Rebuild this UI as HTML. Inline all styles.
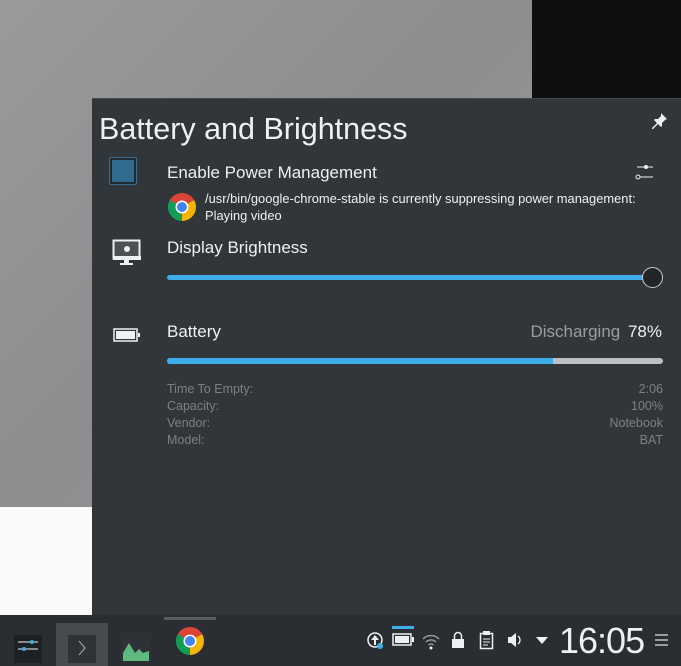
<!DOCTYPE html>
<html><head><style>
*{margin:0;padding:0;box-sizing:border-box}
body{width:681px;height:666px;position:relative;overflow:hidden;background:#2b2f33;font-family:"Liberation Sans","DejaVu Sans",sans-serif}
.a{position:absolute}
.t{color:#eff0f1;white-space:nowrap}
.d{color:#7b8085;font-size:12.5px;white-space:nowrap}
</style></head><body>
<div class="a" style="left:0;top:0;width:532px;height:507px;background:linear-gradient(135deg,#9a9a9b,#8d8d8f 50%,#a3a3a4)"></div>
<div class="a" style="left:532px;top:0;width:149px;height:100px;background:#0f0f0f"></div>
<div class="a" style="left:0;top:507px;width:92px;height:108px;background:#fafafa"></div>
<div class="a" style="left:92px;top:98px;width:589px;height:517px;background:#31363b;border-top:1px solid #45494d"></div>

<div class="a t" style="left:99px;top:112px;font-size:30.5px">Battery and Brightness</div>
<svg class="a" style="left:650px;top:112px" width="18" height="18" viewBox="0 0 18 18"><path d="M11 1l6 6-2 1-3 3 0 3-1 1-3-3-5 5-1 0 0-1 5-5-3-3 1-1 3 0 3-3z" fill="#eff0f1"/></svg>

<div class="a" style="left:109px;top:157px;width:28px;height:28px;border:1.5px solid #3d6b8c;border-radius:2px;background:#1f2a33;padding:2px"><div style="width:100%;height:100%;background:#336b8f"></div></div>
<div class="a t" style="left:167px;top:163px;font-size:17px">Enable Power Management</div>
<svg class="a" style="left:634px;top:162px" width="22" height="20"><line x1="3" y1="5" x2="19" y2="5" stroke="#eff0f1"/><circle cx="12" cy="5" r="2" fill="#eff0f1"/><line x1="6" y1="15" x2="19" y2="15" stroke="#eff0f1"/><circle cx="4" cy="15" r="2" fill="none" stroke="#eff0f1"/></svg>

<svg class="a" style="left:167px;top:192px" width="30" height="30" viewBox="0 0 30 30">
<path d="M15 15 L15 1 A14 14 0 0 1 27.1 8 Z" fill="#db4437"/><path d="M15 1 A14 14 0 0 0 2.9 22 L15 15Z" fill="#db4437"/>
<path d="M2.9 22 A14 14 0 0 1 2.9 8 L15 15Z" fill="#0f9d58"/><path d="M2.9 22 A14 14 0 0 0 15 29 L15 15Z" fill="#0f9d58"/>
<path d="M15 29 A14 14 0 0 0 27.1 8 L15 15Z" fill="#f4b400"/>
<circle cx="15" cy="15" r="6.5" fill="#fff"/><circle cx="15" cy="15" r="5" fill="#4285f4"/></svg>
<div class="a t" style="left:205px;top:190px;font-size:12.9px;line-height:17px">/usr/bin/google-chrome-stable is currently suppressing power management:<br>Playing video</div>

<svg class="a" style="left:112px;top:239px" width="30" height="28"><rect x="1.5" y="1.5" width="26" height="18" fill="#4d5156" stroke="#eff0f1" stroke-width="2"/><rect x="1" y="17" width="28" height="4" fill="#eff0f1"/><rect x="12" y="21" width="5" height="3" fill="#eff0f1"/><rect x="8" y="24" width="13" height="2" fill="#eff0f1"/><circle cx="15" cy="10" r="3" fill="#eff0f1"/></svg>
<div class="a t" style="left:167px;top:238px;font-size:17px">Display Brightness</div>
<div class="a" style="left:167px;top:275px;width:480px;height:5px;border-radius:3px;background:#3daee9"></div>
<div class="a" style="left:642px;top:267px;width:21px;height:21px;border-radius:50%;background:#232629;border:1px solid #c9cbcd"></div>

<svg class="a" style="left:113px;top:328px" width="28" height="14"><rect x="1" y="1" width="23" height="12" fill="none" stroke="#eff0f1" stroke-width="1.5"/><rect x="3" y="3" width="19" height="8" fill="#eff0f1"/><rect x="25" y="5" width="2" height="4" fill="#eff0f1"/></svg>
<div class="a t" style="left:167px;top:322px;font-size:17px">Battery</div>
<div class="a" style="right:19px;top:322px;font-size:17px;white-space:nowrap;color:#9a9ea2">Discharging <span style="color:#eff0f1;margin-left:3px">78%</span></div>
<div class="a" style="left:167px;top:358px;width:496px;height:6px;border-radius:3px;background:#bdbfc1"></div>
<div class="a" style="left:167px;top:358px;width:386px;height:6px;border-radius:3px 0 0 3px;background:#3daee9"></div>

<div class="a d" style="left:167px;top:381px;line-height:17px">Time To Empty:<br>Capacity:<br>Vendor:<br>Model:</div>
<div class="a d" style="right:18px;top:381px;line-height:17px;text-align:right">2:06<br>100%<br>Notebook<br>BAT</div>

<!-- taskbar -->
<div class="a" style="left:0;top:615px;width:681px;height:51px;background:#2a2e32"></div>
<div class="a" style="left:14px;top:635px;width:28px;height:28px;background:#1e2124"></div>
<svg class="a" style="left:15px;top:634px" width="26" height="22"><line x1="3" y1="8" x2="23" y2="8" stroke="#eff0f1"/><circle cx="17" cy="8" r="2" fill="#3daee9"/><line x1="3" y1="15" x2="23" y2="15" stroke="#eff0f1"/><circle cx="9" cy="15" r="2" fill="#3daee9"/></svg>
<div class="a" style="left:56px;top:623px;width:52px;height:43px;background:#474b50"></div>
<div class="a" style="left:68px;top:635px;width:28px;height:28px;background:#2f3336"></div>
<svg class="a" style="left:74px;top:638px" width="16" height="20"><path d="M5 3l6 7-6 7" fill="none" stroke="#9a9ea2" stroke-width="1.2"/></svg>
<svg class="a" style="left:121px;top:633px" width="30" height="28"><rect x="0" y="0" width="30" height="28" fill="#2e3236"/><path d="M2 28 L2 20 8 10 14 20 18 16 22 20 28 18 28 28Z" fill="#5fb87e"/></svg>
<div class="a" style="left:164px;top:617px;width:52px;height:3px;background:#5a5e62"></div>
<svg class="a" style="left:175px;top:625px" width="30" height="32" viewBox="0 0 30 30">
<path d="M15 15 L15 1 A14 14 0 0 1 27.1 8 Z" fill="#db4437"/><path d="M15 1 A14 14 0 0 0 2.9 22 L15 15Z" fill="#db4437"/>
<path d="M2.9 22 A14 14 0 0 1 2.9 8 L15 15Z" fill="#0f9d58"/><path d="M2.9 22 A14 14 0 0 0 15 29 L15 15Z" fill="#0f9d58"/>
<path d="M15 29 A14 14 0 0 0 27.1 8 L15 15Z" fill="#f4b400"/>
<circle cx="15" cy="15" r="6.5" fill="#fff"/><circle cx="15" cy="15" r="5" fill="#4285f4"/></svg>

<svg class="a" style="left:366px;top:631px" width="20" height="20"><circle cx="9" cy="9" r="7" fill="none" stroke="#eff0f1" stroke-width="1.5"/><path d="M9 4l-4 5h3v5h2v-5h3z" fill="#eff0f1"/><circle cx="14" cy="15" r="3" fill="#3daee9"/></svg>
<div class="a" style="left:392px;top:626px;width:22px;height:3px;background:#3daee9"></div>
<svg class="a" style="left:392px;top:632px" width="24" height="16"><rect x="1" y="2" width="18" height="11" fill="none" stroke="#eff0f1" stroke-width="1.5"/><rect x="3" y="4" width="14" height="7" fill="#eff0f1"/><rect x="20" y="5" width="2" height="5" fill="#eff0f1"/></svg>
<svg class="a" style="left:421px;top:631px" width="20" height="20"><path d="M2 8 A11 11 0 0 1 18 8 M5 11 A7 7 0 0 1 15 11 M7.5 14 A3.5 3.5 0 0 1 12.5 14" fill="none" stroke="#9a9ea2" stroke-width="1.4"/><circle cx="10" cy="17" r="1.5" fill="#eff0f1"/></svg>
<svg class="a" style="left:451px;top:630px" width="14" height="20"><path d="M3.5 9 V6 A3.5 3.5 0 0 1 10.5 6 V9" fill="none" stroke="#eff0f1" stroke-width="1.5"/><rect x="1" y="9" width="12" height="9" fill="#eff0f1"/></svg>
<svg class="a" style="left:479px;top:630px" width="16" height="20"><rect x="1.5" y="3.5" width="12" height="15" fill="none" stroke="#eff0f1" stroke-width="1.5"/><rect x="4" y="1" width="7" height="4" fill="#eff0f1"/><path d="M4 9h7M4 12h7M4 15h5" stroke="#eff0f1"/></svg>
<svg class="a" style="left:506px;top:631px" width="18" height="18"><path d="M2 6h3l5-4v14l-5-4H2z" fill="#eff0f1"/><path d="M12 5 A5 5 0 0 1 12 13" fill="none" stroke="#eff0f1" stroke-width="1.3"/></svg>
<svg class="a" style="left:535px;top:636px" width="14" height="10"><path d="M1 1h12l-6 7z" fill="#eff0f1"/></svg>
<div class="a t" style="left:559px;top:620px;font-size:36px;letter-spacing:-1px">16:05</div>
<svg class="a" style="left:654px;top:633px" width="16" height="14"><path d="M1 2h13M1 7h13M1 12h13" stroke="#9a9ea2" stroke-width="2"/></svg>
</body></html>
